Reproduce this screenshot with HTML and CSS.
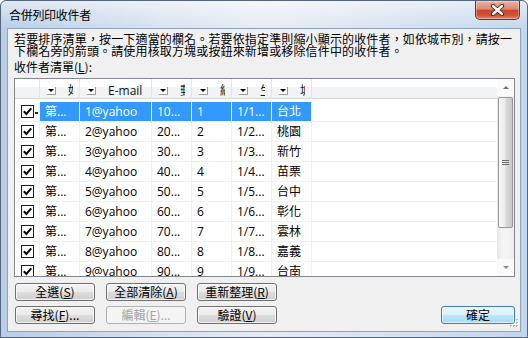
FILE: index.html
```html
<!DOCTYPE html>
<html lang="zh-Hant">
<head>
  <meta charset="UTF-8">
  <title>合併列印收件者</title>
  <link rel="stylesheet" href="styles.css">
</head>
<body>
  <div class="window">
    <div class="titlebar">
      <span class="title">合併列印收件者</span>
      <button class="close-btn" title="關閉">
        <svg width="15" height="12" viewBox="0 0 15 12">
          <path d="M3 2l9 8M12 2l-9 8" stroke="#4a160e" stroke-width="4.2" stroke-linecap="round"/>
          <path d="M3 2l9 8M12 2l-9 8" stroke="#fff" stroke-width="2.4" stroke-linecap="round"/>
        </svg>
      </button>
    </div>

    <div class="client">
      <p class="intro">若要排序清單，按一下適當的欄名。若要依指定準則縮小顯示的收件者，如依城市別，請按一<br>下欄名旁的箭頭。請使用核取方塊或按鈕來新增或移除信件中的收件者。</p>
      <div class="list-label">收件者清單(<u>L</u>):</div>

      <div class="listbox">
        <div class="grid">
          <div class="row head">
            <div class="cell c0"></div>
            <div class="cell c1"><span class="dd"></span><span class="hlabel">姓名</span></div>
            <div class="cell c2"><span class="dd"></span><span class="hlabel">E-mail</span></div>
            <div class="cell c3"><span class="dd"></span><span class="hlabel">郵遞區號</span></div>
            <div class="cell c4"><span class="dd"></span><span class="hlabel">編號</span></div>
            <div class="cell c5"><span class="dd"></span><span class="hlabel">生日</span></div>
            <div class="cell c6"><span class="dd"></span><span class="hlabel">城市</span></div>
            <div class="cell fill"></div>
          </div>

          <div class="row selected">
            <div class="cell c0"><svg class="cb" viewBox="0 0 13 13"><rect x=".5" y=".5" width="12" height="12" fill="#fff" stroke="#1c1c1c"/><path d="M2.8 6.3l2.6 2.7 4.8-5.6" fill="none" stroke="#000" stroke-width="2"/></svg><span class="focus-mark"></span></div>
            <div class="cell c1">第...</div>
            <div class="cell c2">1@yahoo</div>
            <div class="cell c3">10...</div>
            <div class="cell c4">1</div>
            <div class="cell c5">1/1...</div>
            <div class="cell c6">台北</div>
            <div class="cell fill"></div>
          </div>
          <div class="row">
            <div class="cell c0"><svg class="cb" viewBox="0 0 13 13"><rect x=".5" y=".5" width="12" height="12" fill="#fff" stroke="#1c1c1c"/><path d="M2.8 6.3l2.6 2.7 4.8-5.6" fill="none" stroke="#000" stroke-width="2"/></svg></div>
            <div class="cell c1">第...</div>
            <div class="cell c2">2@yahoo</div>
            <div class="cell c3">20...</div>
            <div class="cell c4">2</div>
            <div class="cell c5">1/2...</div>
            <div class="cell c6">桃園</div>
            <div class="cell fill"></div>
          </div>
          <div class="row">
            <div class="cell c0"><svg class="cb" viewBox="0 0 13 13"><rect x=".5" y=".5" width="12" height="12" fill="#fff" stroke="#1c1c1c"/><path d="M2.8 6.3l2.6 2.7 4.8-5.6" fill="none" stroke="#000" stroke-width="2"/></svg></div>
            <div class="cell c1">第...</div>
            <div class="cell c2">3@yahoo</div>
            <div class="cell c3">30...</div>
            <div class="cell c4">3</div>
            <div class="cell c5">1/3...</div>
            <div class="cell c6">新竹</div>
            <div class="cell fill"></div>
          </div>
          <div class="row">
            <div class="cell c0"><svg class="cb" viewBox="0 0 13 13"><rect x=".5" y=".5" width="12" height="12" fill="#fff" stroke="#1c1c1c"/><path d="M2.8 6.3l2.6 2.7 4.8-5.6" fill="none" stroke="#000" stroke-width="2"/></svg></div>
            <div class="cell c1">第...</div>
            <div class="cell c2">4@yahoo</div>
            <div class="cell c3">40...</div>
            <div class="cell c4">4</div>
            <div class="cell c5">1/4...</div>
            <div class="cell c6">苗栗</div>
            <div class="cell fill"></div>
          </div>
          <div class="row">
            <div class="cell c0"><svg class="cb" viewBox="0 0 13 13"><rect x=".5" y=".5" width="12" height="12" fill="#fff" stroke="#1c1c1c"/><path d="M2.8 6.3l2.6 2.7 4.8-5.6" fill="none" stroke="#000" stroke-width="2"/></svg></div>
            <div class="cell c1">第...</div>
            <div class="cell c2">5@yahoo</div>
            <div class="cell c3">50...</div>
            <div class="cell c4">5</div>
            <div class="cell c5">1/5...</div>
            <div class="cell c6">台中</div>
            <div class="cell fill"></div>
          </div>
          <div class="row">
            <div class="cell c0"><svg class="cb" viewBox="0 0 13 13"><rect x=".5" y=".5" width="12" height="12" fill="#fff" stroke="#1c1c1c"/><path d="M2.8 6.3l2.6 2.7 4.8-5.6" fill="none" stroke="#000" stroke-width="2"/></svg></div>
            <div class="cell c1">第...</div>
            <div class="cell c2">6@yahoo</div>
            <div class="cell c3">60...</div>
            <div class="cell c4">6</div>
            <div class="cell c5">1/6...</div>
            <div class="cell c6">彰化</div>
            <div class="cell fill"></div>
          </div>
          <div class="row">
            <div class="cell c0"><svg class="cb" viewBox="0 0 13 13"><rect x=".5" y=".5" width="12" height="12" fill="#fff" stroke="#1c1c1c"/><path d="M2.8 6.3l2.6 2.7 4.8-5.6" fill="none" stroke="#000" stroke-width="2"/></svg></div>
            <div class="cell c1">第...</div>
            <div class="cell c2">7@yahoo</div>
            <div class="cell c3">70...</div>
            <div class="cell c4">7</div>
            <div class="cell c5">1/7...</div>
            <div class="cell c6">雲林</div>
            <div class="cell fill"></div>
          </div>
          <div class="row">
            <div class="cell c0"><svg class="cb" viewBox="0 0 13 13"><rect x=".5" y=".5" width="12" height="12" fill="#fff" stroke="#1c1c1c"/><path d="M2.8 6.3l2.6 2.7 4.8-5.6" fill="none" stroke="#000" stroke-width="2"/></svg></div>
            <div class="cell c1">第...</div>
            <div class="cell c2">8@yahoo</div>
            <div class="cell c3">80...</div>
            <div class="cell c4">8</div>
            <div class="cell c5">1/8...</div>
            <div class="cell c6">嘉義</div>
            <div class="cell fill"></div>
          </div>
          <div class="row">
            <div class="cell c0"><svg class="cb" viewBox="0 0 13 13"><rect x=".5" y=".5" width="12" height="12" fill="#fff" stroke="#1c1c1c"/><path d="M2.8 6.3l2.6 2.7 4.8-5.6" fill="none" stroke="#000" stroke-width="2"/></svg></div>
            <div class="cell c1">第...</div>
            <div class="cell c2">9@yahoo</div>
            <div class="cell c3">90...</div>
            <div class="cell c4">9</div>
            <div class="cell c5">1/9...</div>
            <div class="cell c6">台南</div>
            <div class="cell fill"></div>
          </div>
        </div>

        <div class="vscroll">
          <div class="arrow"><span class="tri-up"></span></div>
          <div class="thumb"><span class="thumb-grip"></span></div>
          <div class="track"></div>
          <div class="arrow"><span class="tri-down"></span></div>
        </div>
      </div>

      <div class="btn-row">
        <button class="btn">全選(<u>S</u>)</button>
        <button class="btn">全部清除(<u>A</u>)</button>
        <button class="btn">重新整理(<u>R</u>)</button>
      </div>
      <div class="btn-row">
        <button class="btn">尋找(<u>F</u>)...</button>
        <button class="btn" disabled>編輯(<u>E</u>)...</button>
        <button class="btn">驗證(<u>V</u>)</button>
        <button class="btn btn-default">確定</button>
      </div>

      <svg class="size-grip" width="11" height="11" viewBox="0 0 11 11">
        <g fill="#b3b9c2">
          <rect x="8" y="0" width="2" height="2"/>
          <rect x="5" y="3" width="2" height="2"/><rect x="8" y="3" width="2" height="2"/>
          <rect x="2" y="6" width="2" height="2"/><rect x="5" y="6" width="2" height="2"/><rect x="8" y="6" width="2" height="2"/>
        </g>
        <g fill="#fff">
          <rect x="9" y="1" width="1" height="1"/>
          <rect x="6" y="4" width="1" height="1"/><rect x="9" y="4" width="1" height="1"/>
          <rect x="3" y="7" width="1" height="1"/><rect x="6" y="7" width="1" height="1"/><rect x="9" y="7" width="1" height="1"/>
        </g>
      </svg>
    </div>
  </div>
</body>
</html>
```

FILE: styles.css
```css
:root {
  --frame-blue: #c3d6ec;
  --face: #f0f0f0;
  --grid-line: #f0f0f0;
  --select-blue: #3399ff;
}

body {
  margin: 0;
  font-family: "Noto Sans CJK TC", "Open Sans", sans-serif;
  font-size: 12px;
  color: #000;
}

.window {
  box-sizing: border-box;
  width: 528px;
  height: 338px;
  border: 1px solid #56657a;
  border-radius: 6px 6px 0 0;
  display: flex;
  flex-direction: column;
  background:
    linear-gradient(180deg, rgba(255, 255, 255, 0.55), rgba(255, 255, 255, 0) 28px),
    linear-gradient(90deg, #b8cde7 0%, #d6e2f0 30%, #e6ecf3 50%, #d9e4f1 70%, #c2d6ec 100%);
}

/* title bar */
.titlebar {
  height: 27px;
  display: flex;
  align-items: flex-start;
}

.title {
  padding-left: 8px;
  line-height: 27px;
  letter-spacing: -0.3px;
}

.close-btn {
  margin-left: auto;
  margin-right: 7px;
  width: 45px;
  height: 19px;
  padding: 0;
  border: 1px solid #7a2a20;
  border-top: none;
  border-radius: 0 0 5px 5px;
  background: linear-gradient(180deg, #eab1a1 0%, #dc8a73 45%, #c9462d 52%, #cf5234 78%, #e0866b 100%);
  box-shadow: inset 0 0 0 1px rgba(255, 255, 255, 0.35);
  display: flex;
  align-items: center;
  justify-content: center;
}

/* client area */
.client {
  position: relative;
  box-sizing: border-box;
  height: 304px;
  margin: 0 6px;
  padding: 4px 5px 0 6px;
  border: 1px solid #8fa3bb;
  background: var(--face);
}

.intro {
  margin: 0;
  line-height: 12px;
  letter-spacing: 0.15px;
  white-space: nowrap;
}

.list-label {
  margin-top: 3px;
  line-height: 14px;
}

/* list view */
.listbox {
  box-sizing: border-box;
  width: 501px;
  height: 199px;
  margin-top: 4px;
  border: 1px solid #828790;
  background: #fff;
  display: flex;
}

.grid {
  flex: 1;
  overflow: hidden;
  font-family: "Open Sans", "Noto Sans CJK TC", sans-serif;
}

.row {
  display: flex;
  height: 20px;
}

.cell {
  box-sizing: border-box;
  height: 20px;
  padding-left: 5px;
  border-right: 1px solid var(--grid-line);
  border-bottom: 1px solid var(--grid-line);
  line-height: 19px;
  white-space: nowrap;
  overflow: hidden;
  flex-shrink: 0;
}

.c0 { width: 25px; padding-left: 6px; display: flex; align-items: center; }
.c1 { width: 40px; }
.c2 { width: 72px; }
.c3, .c4, .c5, .c6 { width: 40px; }
.fill { flex: 1; border-right: none; }

.row.selected .cell:not(.c0):not(.fill) {
  background: var(--select-blue);
  color: #fff;
}

.cb {
  width: 13px;
  height: 13px;
  flex-shrink: 0;
}

.focus-mark {
  width: 3px;
  height: 2px;
  margin: 2px 0 0 1px;
  background: #222;
}

/* header */
.row.head {
  height: 23px;
  align-items: flex-start;
  background: linear-gradient(180deg, #fff 0, #fff 8px, #f2f3f5 8px, #f2f3f5 19px, #d5d5d5 19px, #d5d5d5 20px, #fff 20px);
}

.head .cell {
  height: 20px;
  padding: 4px 6px 0 7px;
  border-bottom: none;
  border-right-color: #e3e5e8;
  display: flex;
  align-items: center;
  background: transparent;
}

.head .c0 { padding: 0; }
.head .fill { border-right: none; }

.dd {
  box-sizing: border-box;
  width: 9px;
  height: 8px;
  flex-shrink: 0;
  border-right: 1px solid #9a9a9a;
  border-bottom: 1px solid #9a9a9a;
  background: #fff;
  display: flex;
  align-items: center;
  justify-content: center;
}

.dd::before {
  content: "";
  border-top: 3px solid #000;
  border-left: 3px solid transparent;
  border-right: 3px solid transparent;
}

.hlabel {
  flex: 1;
  min-width: 0;
  margin-left: 12px;
  overflow: hidden;
  white-space: nowrap;
  line-height: 14px;
  color: #111;
}

/* scrollbar */
.vscroll {
  width: 17px;
  flex-shrink: 0;
  display: flex;
  flex-direction: column;
  background: linear-gradient(90deg, #e6e6e6, #f4f4f4 30%, #f4f4f4 70%, #ececec);
}

.arrow {
  height: 17px;
  display: flex;
  align-items: center;
  justify-content: center;
  background: #fafafa;
}

.tri-up {
  border-bottom: 3px solid #707070;
  border-left: 3px solid transparent;
  border-right: 3px solid transparent;
}

.tri-down {
  border-top: 3px solid #8a8a8a;
  border-left: 3px solid transparent;
  border-right: 3px solid transparent;
}

.thumb {
  box-sizing: border-box;
  height: 131px;
  margin: 1px 0 0 1px;
  width: 15px;
  border: 1px solid #979797;
  border-radius: 2px;
  background: linear-gradient(90deg, #f7f7f7 0%, #ececec 45%, #dadada 55%, #c9c9c9 100%);
  display: flex;
  align-items: center;
  justify-content: center;
}

.thumb-grip {
  width: 7px;
  height: 5px;
  background: repeating-linear-gradient(180deg, #6d6d6d 0, #6d6d6d 1px, transparent 1px, transparent 2px);
}

.track {
  flex: 1;
}

/* buttons */
.btn-row {
  display: flex;
  gap: 11px;
  padding-left: 1px;
  margin-top: 6px;
}

.btn-row + .btn-row {
  margin-top: 5px;
}

.btn {
  box-sizing: border-box;
  width: 80px;
  height: 18px;
  padding: 0;
  font-family: "Noto Sans CJK TC", "Open Sans", sans-serif;
  font-size: 12px;
  line-height: 16px;
  color: #000;
  border: 1px solid #707070;
  border-radius: 3px;
  background: linear-gradient(180deg, #f2f2f2 0%, #ebebeb 50%, #dddddd 50%, #cfcfcf 100%);
  box-shadow: inset 0 0 0 1px rgba(255, 255, 255, 0.7);
}

.btn:disabled {
  color: #a3a3a3;
  border-color: #adb2b5;
  background: #f4f4f4;
  box-shadow: none;
}

.btn-default {
  width: 74px;
  margin-left: auto;
  border-color: #3c7fb1;
  background: linear-gradient(180deg, #eaf6fd 0%, #d9f0fc 50%, #bee6fd 50%, #a7d9f5 100%);
  box-shadow: inset 0 0 0 1px rgba(255, 255, 255, 0.6);
}

.size-grip {
  position: absolute;
  right: 1px;
  bottom: 1px;
}
```
